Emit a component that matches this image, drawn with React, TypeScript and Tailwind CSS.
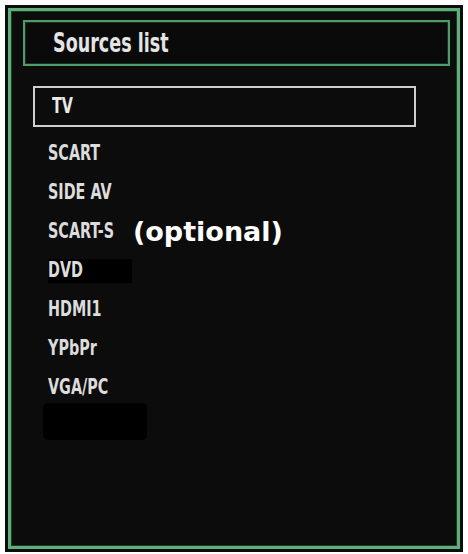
const sources = ['SCART', 'SIDE AV', 'SCART-S', 'DVD', 'HDMI1', 'YPbPr', 'VGA/PC'];

const tvFont = { fontFamily: '"DejaVu Sans Condensed", "Liberation Sans", sans-serif' };

export default function App() {
  return (
    <div className="w-[468px] h-[554px] bg-white pt-[5px] pl-[5px]">
      {/* Outer frame */}
      <div className="w-[458px] h-[547px] border-[3px] border-[#0b0f0c] bg-[#0c0c0c]">
        <div className="h-full border-[3px] border-[#5fae7c] shadow-[inset_0_0_0_1px_#1d3a26] pt-[9px] pl-[12px]" style={tvFont}>
          {/* Header */}
          <div className="w-[427px] h-[46px] border-2 border-[#4f9c6a] shadow-[inset_0_0_0_1px_#163020] flex items-center pl-[28px] bg-[#0a0a0a]">
            <span className="inline-block origin-left scale-x-[0.75] text-[26px] font-bold text-[#e4e4e4] leading-none">
              Sources list
            </span>
          </div>

          {/* Source list */}
          <div className="ml-[10px] mt-[20px]">
            <div className="w-[383px] h-[41px] border-2 border-[#cfcfcf] flex items-center pl-[17px]">
              <span className="inline-block origin-left scale-x-[0.76] text-[21px] font-bold text-[#e8e8e8] leading-none">
                TV
              </span>
            </div>
            <div className="mt-[7px] flex flex-col pl-[15px]">
              {sources.map((s) => (
                <div key={s} className="h-[39px] flex items-center">
                  <span className={s === 'DVD' ? 'bg-black w-[84px] h-[24px] flex items-center' : 'flex items-center'}>
                    <span className="inline-block origin-left scale-x-[0.76] text-[21px] font-bold text-[#dcdcdc] leading-none">
                      {s}
                    </span>
                  </span>
                  {s === 'SCART-S' && (
                    <span
                      className="-ml-[2px] text-[27px] font-bold text-white leading-none"
                      style={{ fontFamily: '"DejaVu Sans", Verdana, sans-serif' }}
                    >
                      (optional)
                    </span>
                  )}
                </div>
              ))}
              {/* blanked-out entry */}
              <div className="mt-[-4px] -ml-[5px] w-[104px] h-[37px] bg-black rounded-[5px]" />
            </div>
          </div>
        </div>
      </div>
    </div>
  );
}
